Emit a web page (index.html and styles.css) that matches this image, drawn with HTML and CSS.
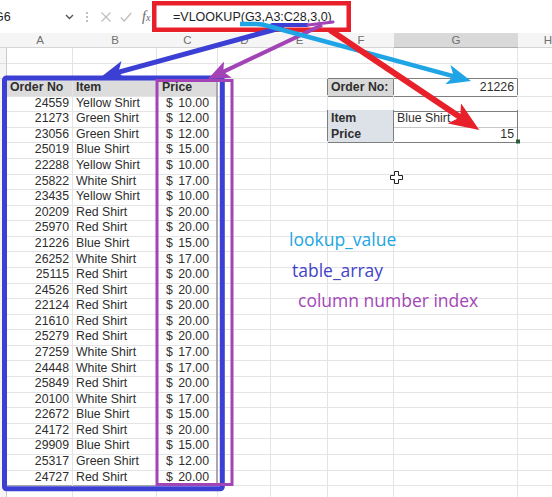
FILE: index.html
```html
<!DOCTYPE html>
<html>
<head>
<meta charset="utf-8">
<link rel="stylesheet" href="styles.css">
</head>
<body>
<div class="bar">
  <div class="namebox"><span class="nbt">G6</span><svg class="chev" viewBox="0 0 9 6"><path d="M1 1 L4.5 4.5 L8 1" fill="none" stroke="#555" stroke-width="1.4"/></svg></div>
  <svg class="dots" viewBox="0 0 14 14"><circle cx="7" cy="3" r="1" fill="#aaa"/><circle cx="7" cy="7" r="1" fill="#aaa"/><circle cx="7" cy="11" r="1" fill="#aaa"/></svg>
  <div class="btns">
    <svg class="ico" viewBox="0 0 12 12"><path d="M1.5 1.5 L10.5 10.5 M10.5 1.5 L1.5 10.5" stroke="#bdbdbd" stroke-width="1.2"/></svg>
    <svg class="ico" viewBox="0 0 12 12"><path d="M0.8 6.5 L4.3 10 L11.2 2" fill="none" stroke="#bdbdbd" stroke-width="1.2"/></svg>
    <span class="fx"><i>f</i><span class="x">x</span></span>
  </div>
  <div class="formula">=VLOOKUP(G3,A3:C28,3,0)</div>
</div>
<div class="colhdr">
  <div></div><div>A</div><div>B</div><div>C</div><div>D</div><div>E</div><div>F</div><div class="sel">G</div><div>H</div>
</div>
<div class="sheet">
  <div class="r"><div class="rh"></div><div class="c"></div><div class="c"></div><div class="c"></div><div class="c"></div><div class="c"></div><div class="c"></div><div class="c"></div><div class="c"></div></div>
  <div class="r"><div class="rh"></div><div class="c"></div><div class="c"></div><div class="c"></div><div class="c"></div><div class="c"></div><div class="c bb"></div><div class="c bb"></div><div class="c"></div></div>
  <div class="r"><div class="rh"></div><div class="c th">Order No</div><div class="c th">Item</div><div class="c th ph">Price</div><div class="c"></div><div class="c br"></div><div class="c lbl br bb">Order No:</div><div class="c n br bb">21226</div><div class="c"></div></div>
  <div class="r"><div class="rh"></div><div class="c n">24559</div><div class="c">Yellow Shirt</div><div class="c p"><span>$</span><span>10.00</span></div><div class="c"></div><div class="c"></div><div class="c bb"></div><div class="c bb"></div><div class="c"></div></div>
  <div class="r"><div class="rh"></div><div class="c n">21273</div><div class="c">Green Shirt</div><div class="c p"><span>$</span><span>12.00</span></div><div class="c"></div><div class="c br"></div><div class="c lbl2 br bb">Item</div><div class="c br soft">Blue Shirt</div><div class="c"></div></div>
  <div class="r"><div class="rh"></div><div class="c n">23056</div><div class="c">Green Shirt</div><div class="c p"><span>$</span><span>12.00</span></div><div class="c"></div><div class="c br"></div><div class="c lbl2 br bb">Price</div><div class="c n br bb">15</div><div class="c"></div></div>
  <div class="r"><div class="rh"></div><div class="c n">25019</div><div class="c">Blue Shirt</div><div class="c p"><span>$</span><span>15.00</span></div><div class="c"></div><div class="c"></div><div class="c"></div><div class="c"></div><div class="c"></div></div>
  <div class="r"><div class="rh"></div><div class="c n">22288</div><div class="c">Yellow Shirt</div><div class="c p"><span>$</span><span>10.00</span></div><div class="c"></div><div class="c"></div><div class="c"></div><div class="c"></div><div class="c"></div></div>
  <div class="r"><div class="rh"></div><div class="c n">25822</div><div class="c">White Shirt</div><div class="c p"><span>$</span><span>17.00</span></div><div class="c"></div><div class="c"></div><div class="c"></div><div class="c"></div><div class="c"></div></div>
  <div class="r"><div class="rh"></div><div class="c n">23435</div><div class="c">Yellow Shirt</div><div class="c p"><span>$</span><span>10.00</span></div><div class="c"></div><div class="c"></div><div class="c"></div><div class="c"></div><div class="c"></div></div>
  <div class="r"><div class="rh"></div><div class="c n">20209</div><div class="c">Red Shirt</div><div class="c p"><span>$</span><span>20.00</span></div><div class="c"></div><div class="c"></div><div class="c"></div><div class="c"></div><div class="c"></div></div>
  <div class="r"><div class="rh"></div><div class="c n">25970</div><div class="c">Red Shirt</div><div class="c p"><span>$</span><span>20.00</span></div><div class="c"></div><div class="c"></div><div class="c"></div><div class="c"></div><div class="c"></div></div>
  <div class="r"><div class="rh"></div><div class="c n">21226</div><div class="c">Blue Shirt</div><div class="c p"><span>$</span><span>15.00</span></div><div class="c"></div><div class="c"></div><div class="c"></div><div class="c"></div><div class="c"></div></div>
  <div class="r"><div class="rh"></div><div class="c n">26252</div><div class="c">White Shirt</div><div class="c p"><span>$</span><span>17.00</span></div><div class="c"></div><div class="c"></div><div class="c"></div><div class="c"></div><div class="c"></div></div>
  <div class="r"><div class="rh"></div><div class="c n">25115</div><div class="c">Red Shirt</div><div class="c p"><span>$</span><span>20.00</span></div><div class="c"></div><div class="c"></div><div class="c"></div><div class="c"></div><div class="c"></div></div>
  <div class="r"><div class="rh"></div><div class="c n">24526</div><div class="c">Red Shirt</div><div class="c p"><span>$</span><span>20.00</span></div><div class="c"></div><div class="c"></div><div class="c"></div><div class="c"></div><div class="c"></div></div>
  <div class="r"><div class="rh"></div><div class="c n">22124</div><div class="c">Red Shirt</div><div class="c p"><span>$</span><span>20.00</span></div><div class="c"></div><div class="c"></div><div class="c"></div><div class="c"></div><div class="c"></div></div>
  <div class="r"><div class="rh"></div><div class="c n">21610</div><div class="c">Red Shirt</div><div class="c p"><span>$</span><span>20.00</span></div><div class="c"></div><div class="c"></div><div class="c"></div><div class="c"></div><div class="c"></div></div>
  <div class="r"><div class="rh"></div><div class="c n">25279</div><div class="c">Red Shirt</div><div class="c p"><span>$</span><span>20.00</span></div><div class="c"></div><div class="c"></div><div class="c"></div><div class="c"></div><div class="c"></div></div>
  <div class="r"><div class="rh"></div><div class="c n">27259</div><div class="c">White Shirt</div><div class="c p"><span>$</span><span>17.00</span></div><div class="c"></div><div class="c"></div><div class="c"></div><div class="c"></div><div class="c"></div></div>
  <div class="r"><div class="rh"></div><div class="c n">24448</div><div class="c">White Shirt</div><div class="c p"><span>$</span><span>17.00</span></div><div class="c"></div><div class="c"></div><div class="c"></div><div class="c"></div><div class="c"></div></div>
  <div class="r"><div class="rh"></div><div class="c n">25849</div><div class="c">Red Shirt</div><div class="c p"><span>$</span><span>20.00</span></div><div class="c"></div><div class="c"></div><div class="c"></div><div class="c"></div><div class="c"></div></div>
  <div class="r"><div class="rh"></div><div class="c n">20100</div><div class="c">White Shirt</div><div class="c p"><span>$</span><span>17.00</span></div><div class="c"></div><div class="c"></div><div class="c"></div><div class="c"></div><div class="c"></div></div>
  <div class="r"><div class="rh"></div><div class="c n">22672</div><div class="c">Blue Shirt</div><div class="c p"><span>$</span><span>15.00</span></div><div class="c"></div><div class="c"></div><div class="c"></div><div class="c"></div><div class="c"></div></div>
  <div class="r"><div class="rh"></div><div class="c n">24172</div><div class="c">Red Shirt</div><div class="c p"><span>$</span><span>20.00</span></div><div class="c"></div><div class="c"></div><div class="c"></div><div class="c"></div><div class="c"></div></div>
  <div class="r"><div class="rh"></div><div class="c n">29909</div><div class="c">Blue Shirt</div><div class="c p"><span>$</span><span>15.00</span></div><div class="c"></div><div class="c"></div><div class="c"></div><div class="c"></div><div class="c"></div></div>
  <div class="r"><div class="rh"></div><div class="c n">25317</div><div class="c">Green Shirt</div><div class="c p"><span>$</span><span>12.00</span></div><div class="c"></div><div class="c"></div><div class="c"></div><div class="c"></div><div class="c"></div></div>
  <div class="r"><div class="rh"></div><div class="c n last">24727</div><div class="c last">Red Shirt</div><div class="c p last"><span>$</span><span>20.00</span></div><div class="c"></div><div class="c"></div><div class="c"></div><div class="c"></div><div class="c"></div></div>
  <div class="r"><div class="rh"></div><div class="c"></div><div class="c"></div><div class="c"></div><div class="c"></div><div class="c"></div><div class="c"></div><div class="c"></div><div class="c"></div></div>
</div>

<div class="notes">
  <div class="lk">lookup_value</div>
  <div class="ta">table_array</div>
  <div class="cn">column number index</div>
</div>

<svg class="ov" width="552" height="497" viewBox="0 0 552 497">
  <defs>
    <marker id="mr" viewBox="0 0 30 24" refX="20" refY="12" markerWidth="30" markerHeight="24" markerUnits="userSpaceOnUse" orient="auto"><path d="M0 0 L30 12 L0 24 L7 12 Z" fill="#e8202a"/></marker>
    <marker id="mc" viewBox="0 0 24 20" refX="16" refY="10" markerWidth="24" markerHeight="20" markerUnits="userSpaceOnUse" orient="auto"><path d="M0 0 L24 10 L0 20 L6 10 Z" fill="#1fa5e6"/></marker>
    <marker id="mb" viewBox="0 0 24 20" refX="16" refY="10" markerWidth="24" markerHeight="20" markerUnits="userSpaceOnUse" orient="auto"><path d="M0 0 L24 10 L0 20 L6 10 Z" fill="#3b3fd3"/></marker>
    <marker id="mp" viewBox="0 0 22 18" refX="14" refY="9" markerWidth="22" markerHeight="18" markerUnits="userSpaceOnUse" orient="auto"><path d="M0 0 L22 9 L0 18 L5 9 Z" fill="#a244b5"/></marker>
  </defs>
  <rect x="154.25" y="3.25" width="194.5" height="26.5" fill="none" stroke="#e8202a" stroke-width="4.5"/>
  <rect x="4.5" y="78" width="217.8" height="410.7" rx="2" fill="none" stroke="#3b3fd3" stroke-width="5"/>
  <rect x="157" y="80.5" width="75" height="404" fill="none" stroke="#a244b5" stroke-width="3"/>
  <path d="M272 25 H307" stroke="#3b3fd3" stroke-width="4" stroke-linecap="round"/>
  <path d="M308 25 L333 22" stroke="#a244b5" stroke-width="3" stroke-linecap="round"/>
  <path d="M284 27 L108.7 74.9" stroke="#3b3fd3" stroke-width="5" fill="none" marker-end="url(#mb)"/>
  <path d="M322 25 L215.2 75.6" stroke="#a244b5" stroke-width="4" fill="none" marker-end="url(#mp)"/>
  <path d="M240 24 L256 24 Q262 24 268 26 L463.3 78.9" stroke="#1fa5e6" stroke-width="4.5" fill="none" marker-end="url(#mc)"/>
  <path d="M330 30 L471 124.5" stroke="#e8202a" stroke-width="6" fill="none" marker-end="url(#mr)"/>
  <rect x="516" y="139.5" width="4" height="4" fill="#2b5d3a"/>
  <path transform="translate(390.5 171.5)" d="M4 0 H8 V4 H12 V8 H8 V12 H4 V8 H0 V4 H4 Z" fill="#fff" stroke="#222" stroke-width="1"/>
</svg>
</body>
</html>
```

FILE: styles.css
```css
:root {
  --cols: 7px 66px 84px 61px 53px 57px 66px 124px 60px;
}
* { box-sizing: border-box; }
body {
  margin: 0;
  width: 552px;
  height: 497px;
  overflow: hidden;
  position: relative;
  background: #fff;
  font-family: "Liberation Sans", Arial, sans-serif;
  color: #2a2a2a;
}
.bar {
  display: flex;
  align-items: center;
  height: 33px;
  padding-top: 1px;
  font-size: 12.5px;
  background: #fff;
}
.namebox {
  width: 80px;
  display: flex;
  align-items: center;
  justify-content: space-between;
  padding-right: 6px;
}
.nbt { margin-left: -6px; color: #222; }
.chev { width: 9px; height: 6px; }
.dots { width: 14px; height: 14px; }
.btns {
  width: 58px;
  display: flex;
  align-items: center;
  padding-left: 6px;
  gap: 8px;
}
.ico { width: 12px; height: 12px; }
.fx {
  margin-left: 2px;
  font-family: "Liberation Serif", serif;
  font-size: 14px;
  color: #666;
}
.fx .x { font-size: 10px; font-style: italic; }
.formula {
  padding-left: 21px;
  color: #1e1e1e;
  white-space: nowrap;
}
.colhdr {
  display: grid;
  grid-template-columns: var(--cols);
  height: 15px;
  background: #f5f5f5;
  border-bottom: 1px solid #d6d6d6;
  font-size: 11.5px;
  line-height: 14px;
  color: #707070;
  text-align: center;
}
.colhdr .sel { background: #d9d9d9; border-bottom: 1px solid #b0b0b0; }
.r {
  display: grid;
  grid-template-columns: var(--cols);
  height: 15.58px;
}
.rh {
  background: #f5f5f5;
  border-right: 1px solid #cacaca;
  border-bottom: 1px solid #dedede;
}
.c {
  border-right: 1px solid #e4e4e4;
  border-bottom: 1px solid #e4e4e4;
  font-size: 12.3px;
  line-height: 15.5px;
  padding: 1px 3px 0;
  white-space: nowrap;
  color: #2e2e2e;
}
.n { text-align: right; }
.th { background: #dcdcdc; font-weight: bold; }
.ph { padding-left: 5px; border-right: 2px solid #a8a8a8; }
.p {
  display: flex;
  justify-content: space-between;
  padding: 1px 7px 0 9px;
  border-right: 2px solid #a8a8a8;
}
.last { border-bottom-color: #a8a8a8; }
.bb { border-bottom-color: #7d7d7d; }
.br { border-right-color: #7d7d7d; }
.soft { border-bottom-color: #c8c8c8; }
.lbl { background: #d9d9d9; font-weight: bold; }
.lbl2 { background: #dde1e8; font-weight: bold; }
.notes {
  position: absolute;
  left: 289px;
  top: 224px;
  font-family: "Open Sans", sans-serif;
  font-size: 17.5px;
  line-height: 30.5px;
}
.lk { color: #22a6e2; }
.ta { color: #4343c9; padding-left: 3px; }
.cn { color: #a347b6; padding-left: 9px; }
.ov {
  position: absolute;
  left: 0;
  top: 0;
  pointer-events: none;
}
```
